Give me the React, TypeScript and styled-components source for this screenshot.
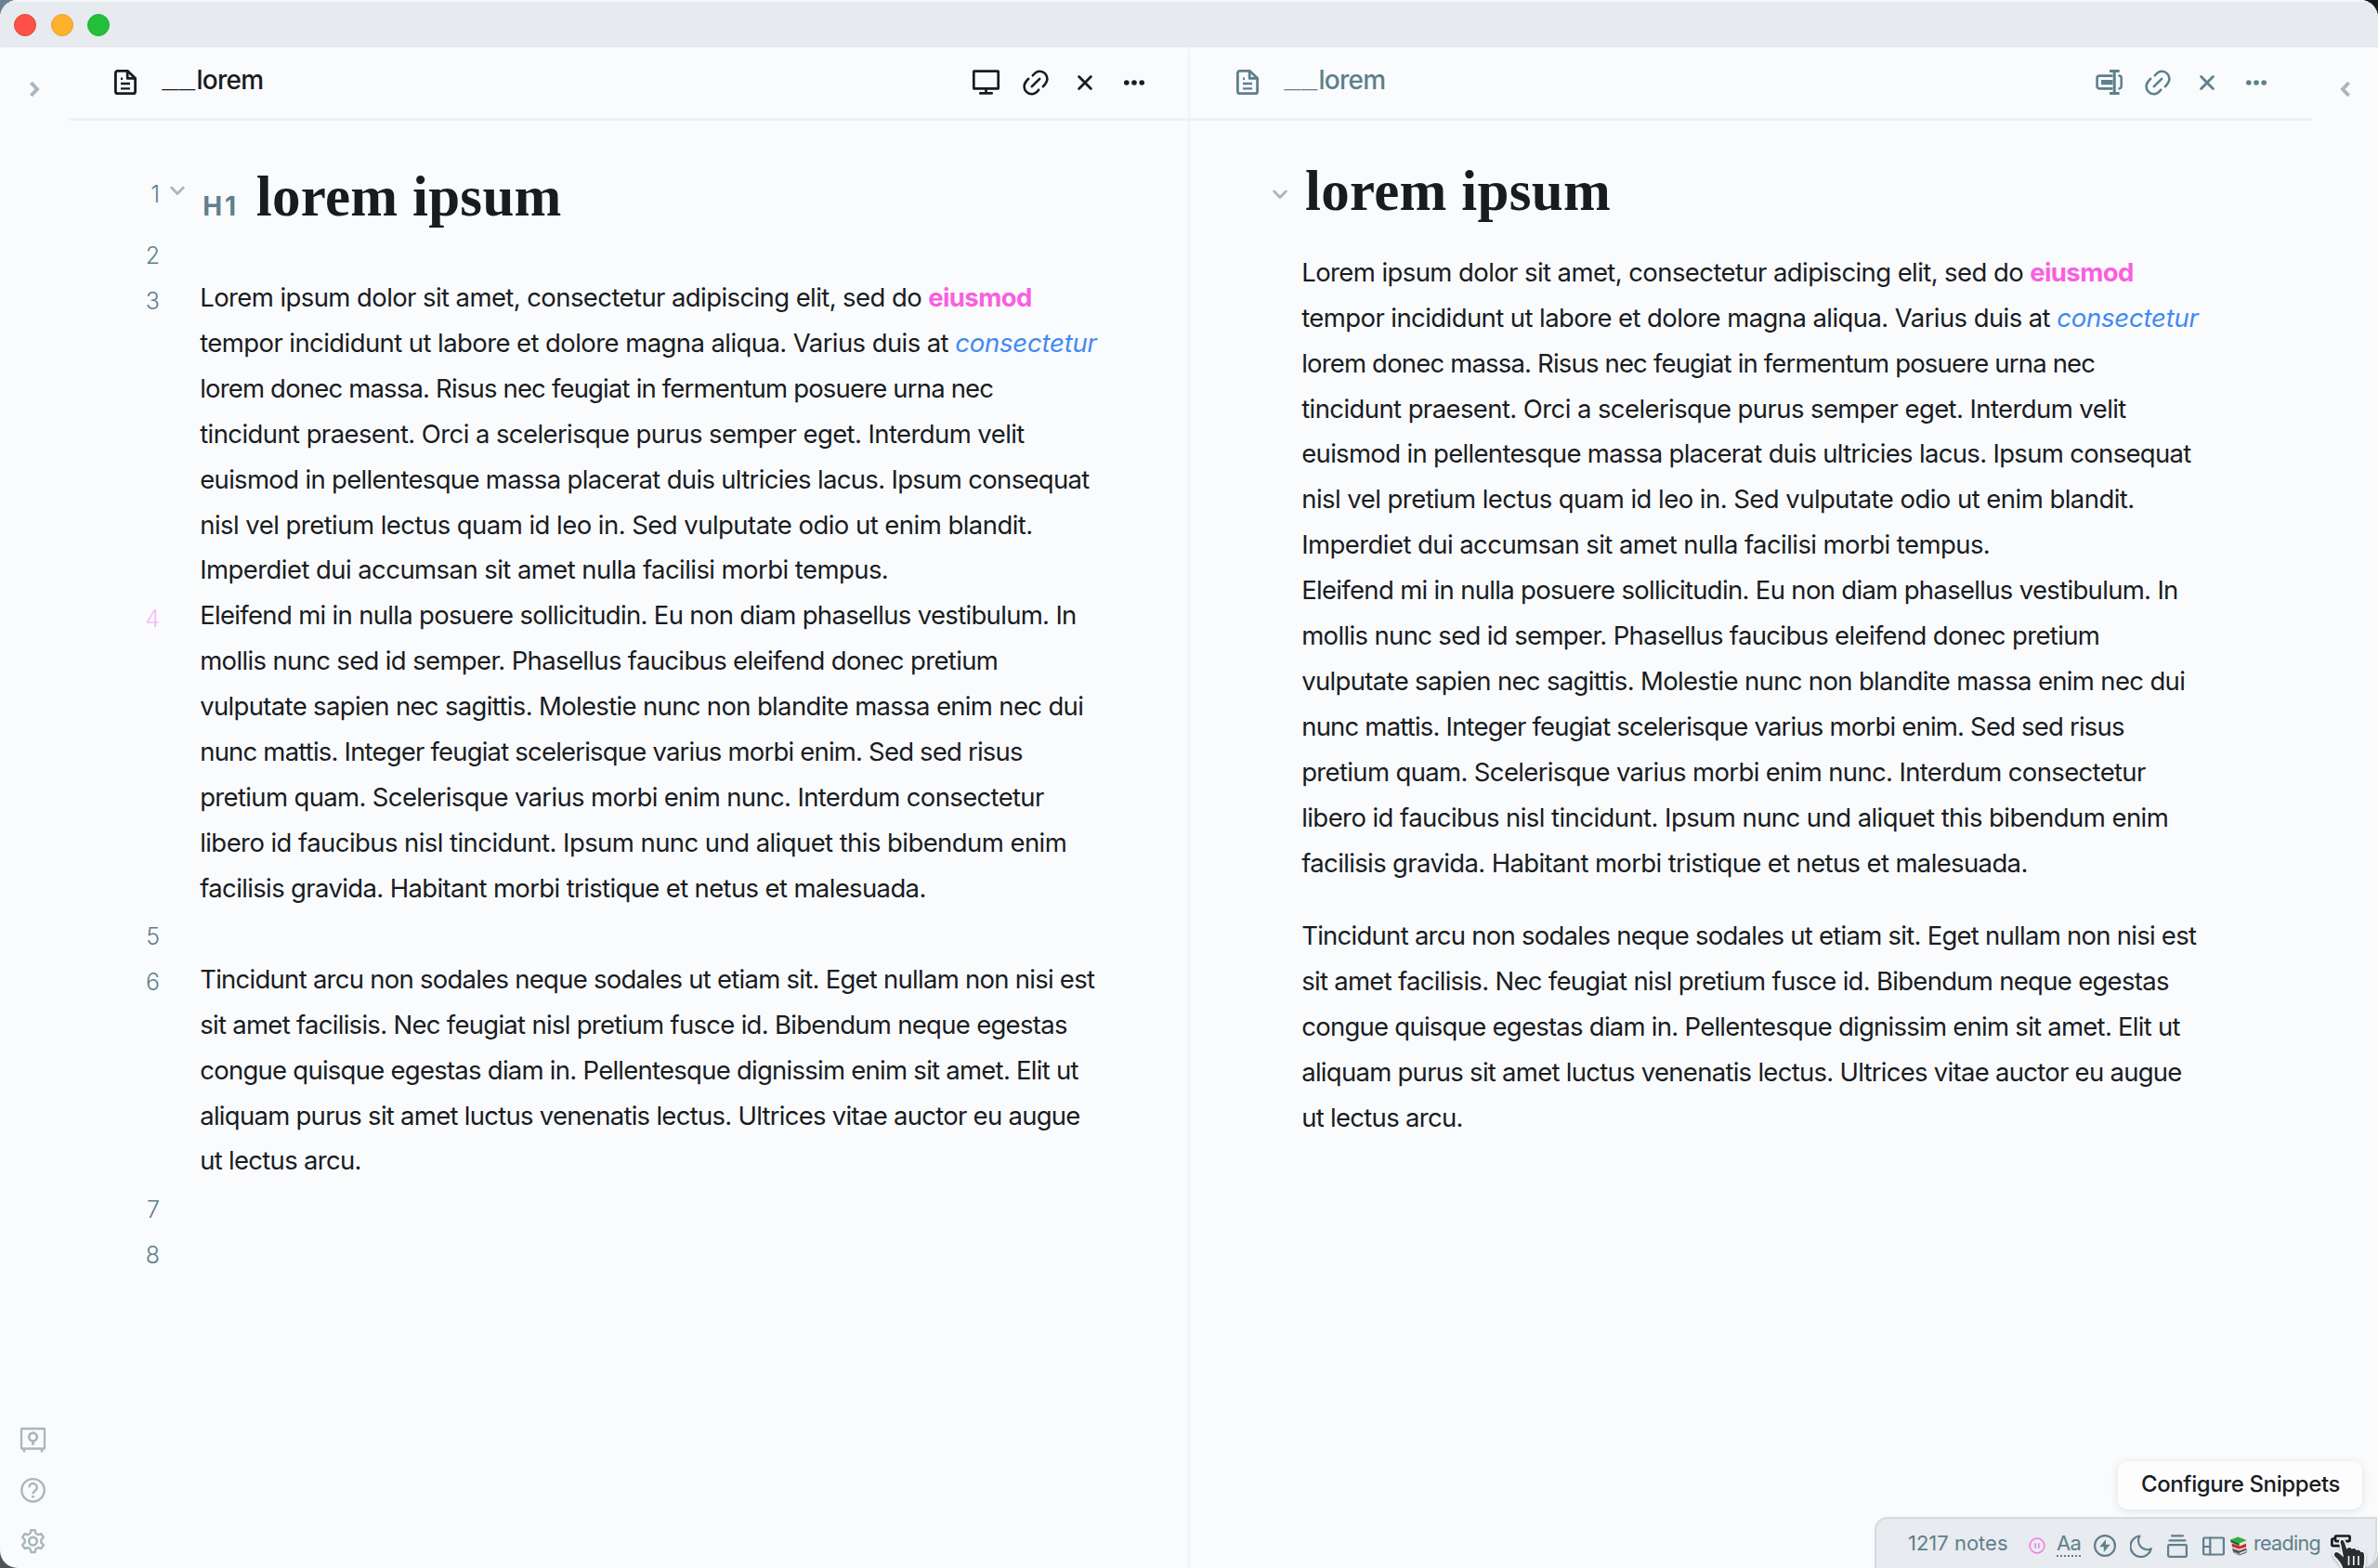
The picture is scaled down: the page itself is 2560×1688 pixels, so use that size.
import React, { useLayoutEffect, useRef, useState } from "react";
import styled, { createGlobalStyle, css } from "styled-components";

const slate = "#5f7f8d";
const faint = "#a9b7bc";
const ink = "#191c1f";

const Global = createGlobalStyle`
  * { box-sizing: border-box; }
  html, body { margin: 0; padding: 0; }
  body { font-family: Inter, "Liberation Sans", sans-serif; color: ${ink}; }
`;

const Desktop = styled.div`
  width: 2560px;
  height: 1688px;
  overflow: hidden;
  background:
    linear-gradient(90deg, #6c8290 0 50%, #15191d 50%) top / 100% 50% no-repeat,
    linear-gradient(90deg, #505256 0 50%, #c3c6c9 50%) bottom / 100% 50% no-repeat;
`;

const Window = styled.div`
  display: flex;
  flex-direction: column;
  width: 100%;
  height: 100%;
  overflow: hidden;
  border-radius: 19px;
  background: #fafbfd;
`;

const TitleBar = styled.div`
  display: flex;
  align-items: center;
  gap: 15.4px;
  flex: none;
  height: 51px;
  padding: 3px 15.3px 0;
  background: #e7eaee;
  box-shadow: inset 0 2px 1px #f3f5f7;
`;

const Light = styled.span<{ $color: string; $edge: string }>`
  width: 24px;
  height: 24px;
  border-radius: 50%;
  border: 1px solid ${(p) => p.$edge};
  background: ${(p) => p.$color};
`;

const Workspace = styled.div`
  display: grid;
  grid-template-columns: 74px 1207px 1208px 71px;
  flex: 1;
  min-height: 0;
`;

const Rail = styled.div<{ $side: "left" | "right" }>`
  display: flex;
  flex-direction: column;
  align-items: flex-start;
  justify-content: space-between;
  padding: 35px 0 15px ${(p) => (p.$side === "left" ? "20.5px" : "20px")};
  color: ${faint};
`;

const RailIcons = styled.div`
  display: flex;
  flex-direction: column;
  gap: 25.2px;
`;

const Pane = styled.section<{ $divided?: boolean }>`
  display: flex;
  flex-direction: column;
  ${(p) => p.$divided && css`border-right: 2px solid #f1f3f5;`}
`;

const PaneHeader = styled.header<{ $active?: boolean }>`
  display: flex;
  align-items: center;
  flex: none;
  height: 79px;
  padding: 0 ${(p) => (p.$active ? 40.5 : 42)}px 1px ${(p) => (p.$active ? 48.5 : 49.5)}px;
  border-bottom: 3px solid #eff1f3;
  color: ${(p) => (p.$active ? ink : slate)};
`;

const PaneTitle = styled.div`
  flex: 1;
  margin: -5px 0 0 28px;
  font-size: 28px;
  font-weight: 500;
  line-height: 40px;
`;

const Underscores = styled.span`
  display: inline-block;
  width: 37px;
  font-family: "Liberation Sans", sans-serif;
  font-size: 31px;
  font-weight: 700;
  letter-spacing: 1px;
  line-height: 20px;
  vertical-align: 3px;
`;

const Actions = styled.div`
  display: flex;
  gap: 17px;
`;

const IconSlot = styled.span<{ $w?: number; $h?: number }>`
  display: flex;
  align-items: center;
  justify-content: center;
  width: ${(p) => p.$w ?? 36}px;
  height: ${(p) => p.$h ?? 36}px;
  svg { flex: none; overflow: visible; }
`;

const Editor = styled.div`
  display: flex;
  flex-direction: column;
  padding-top: 43.6px;
`;

const EditorRow = styled.div<{ $height?: number }>`
  display: grid;
  grid-template-columns: 98px 43.2px 1fr;
  min-height: ${(p) => p.$height ?? 48.93}px;
`;

const LineNumber = styled.div<{ $heading?: boolean; $current?: boolean }>`
  padding-top: ${(p) => (p.$heading ? 15.4 : 7.6)}px;
  text-align: right;
  font-size: 25px;
  font-weight: 350;
  line-height: 40px;
  color: ${(p) => (p.$current ? "#f3bdf6" : slate)};
`;

const Fold = styled.div<{ $top: number; $left: number }>`
  padding: ${(p) => p.$top}px 0 0 ${(p) => p.$left}px;
  color: ${faint};
  line-height: 0;
`;

const Heading = styled.h1<{ $indent: number }>`
  margin: 0;
  height: 73.400px;
  padding-left: ${(p) => p.$indent}px;
  font-family: "Liberation Serif", serif;
  font-size: 61px;
  font-weight: 700;
  line-height: 75px;
  white-space: pre;
`;

const HeadingMark = styled.span`
  display: inline-block;
  width: 57.5px;
  font-family: Inter, sans-serif;
  font-size: 28px;
  line-height: 28px;
  color: ${slate};
`;

const Preview = styled.div`
  display: grid;
  grid-template-columns: 120.2px 1fr;
  padding-top: 37.6px;
`;

const PreviewBody = styled.div`
  display: flex;
  flex-direction: column;
`;

const Paragraph = styled.div<{ $gap?: number }>`
  margin-top: ${(p) => p.$gap ?? 0}px;
  font-size: 27.5px;
`;

const TextLine = styled.div`
  height: 48.93px;
  line-height: 48.93px;
  white-space: pre;
`;

const Run = styled.span<{ $tone?: "bold" | "italic" }>`
  display: inline-block;
  white-space: pre;
  ${(p) => p.$tone === "bold" && css`font-weight: 700; color: #f95fe0;`}
  ${(p) => p.$tone === "italic" && css`font-style: italic; color: #4289f2;`}
`;

/* Spreads its letters so that the run takes exactly the given width. */
function Fit({ text, width, tone }: { text: string; width: number; tone?: "bold" | "italic" }) {
  const ref = useRef<HTMLSpanElement>(null);
  const [spacing, setSpacing] = useState(0);
  useLayoutEffect(() => {
    if (ref.current) {
      const natural = ref.current.getBoundingClientRect().width;
      setSpacing((width - natural) / text.length);
    }
  }, [text, width]);
  return (
    <Run ref={ref} $tone={tone} style={{ letterSpacing: `${spacing}px` }}>
      {text}
    </Run>
  );
}

type Piece = [text: string, width: number, tone?: "bold" | "italic"];

const first: Piece[][] = [
  [["Lorem ipsum dolor sit amet, consectetur adipiscing elit, sed do ", 784], ["eiusmod", 111.5, "bold"]],
  [["tempor incididunt ut labore et dolore magna aliqua. Varius duis at ", 813], ["consectetur", 152.5, "italic"]],
  [["lorem donec massa. Risus nec feugiat in fermentum posuere urna nec", 854]],
  [["tincidunt praesent. Orci a scelerisque purus semper eget. Interdum velit", 887.5]],
  [["euismod in pellentesque massa placerat duis ultricies lacus. Ipsum consequat", 957.5]],
  [["nisl vel pretium lectus quam id leo in. Sed vulputate odio ut enim blandit.", 896.5]],
  [["Imperdiet dui accumsan sit amet nulla facilisi morbi tempus.", 741]],
];
const second: Piece[][] = [
  [["Eleifend mi in nulla posuere sollicitudin. Eu non diam phasellus vestibulum. In", 943.5]],
  [["mollis nunc sed id semper. Phasellus faucibus eleifend donec pretium", 859]],
  [["vulputate sapien nec sagittis. Molestie nunc non blandite massa enim nec dui", 951]],
  [["nunc mattis. Integer feugiat scelerisque varius morbi enim. Sed sed risus", 885.5]],
  [["pretium quam. Scelerisque varius morbi enim nunc. Interdum consectetur", 908.5]],
  [["libero id faucibus nisl tincidunt. Ipsum nunc und aliquet this bibendum enim", 933]],
  [["facilisis gravida. Habitant morbi tristique et netus et malesuada.", 781.5]],
];
const third: Piece[][] = [
  [["Tincidunt arcu non sodales neque sodales ut etiam sit. Eget nullam non nisi est", 963]],
  [["sit amet facilisis. Nec feugiat nisl pretium fusce id. Bibendum neque egestas", 933.5]],
  [["congue quisque egestas diam in. Pellentesque dignissim enim sit amet. Elit ut", 945.5]],
  [["aliquam purus sit amet luctus venenatis lectus. Ultrices vitae auctor eu augue", 947.5]],
  [["ut lectus arcu.", 173.5]],
];

function Prose({ lines, gap }: { lines: Piece[][]; gap?: number }) {
  return (
    <Paragraph $gap={gap}>
      {lines.map((line, i) => (
        <TextLine key={i}>
          {line.map(([text, width, tone]) => (
            <Fit key={text} text={text} width={width} tone={tone} />
          ))}
        </TextLine>
      ))}
    </Paragraph>
  );
}

const StrokeSvg = styled.svg<{ $sw: number }>`
  display: block;
  fill: none;
  stroke: currentColor;
  stroke-width: ${(p) => p.$sw};
  stroke-linecap: round;
  stroke-linejoin: round;
`;

const DocIcon = () => (
  <StrokeSvg width="24" height="27" viewBox="0 0 24 27" $sw={2.8}>
    <path d="M14.5 1.4H3.6a2.2 2.2 0 0 0-2.2 2.2v19.8a2.2 2.2 0 0 0 2.2 2.2h16.8a2.2 2.2 0 0 0 2.2-2.2V9.2z" />
    <path d="M14.2 1.8v7.6h8" />
    <path d="M7 15h10M7 20.4h10" strokeWidth="2.4" strokeLinecap="butt" />
    <path d="M7 9.7h2" strokeWidth="2.4" strokeLinecap="butt" />
  </StrokeSvg>
);
const MonitorIcon = () => (
  <StrokeSvg width="29" height="27" viewBox="0 0 29 27" $sw={2.7}>
    <rect x="1.3" y="1.6" width="26.4" height="18.8" rx="0.5" />
    <path d="M14.5 20.5v5M8.3 25.4h12.4" />
  </StrokeSvg>
);
const LinkIcon = () => (
  <StrokeSvg width="28" height="28" viewBox="0 0 28 28" $sw={2.6}>
    <path d="M10.8 6.3C13 3.4 15.5 1.7 18.3 1.7a8.2 8.2 0 0 1 8.1 8.1c0 3-1.7 5.6-4.6 8.4" />
    <path d="M17.2 21.7c-2.2 2.9-4.7 4.6-7.5 4.6a8.2 8.2 0 0 1-8.1-8.1c0-3 1.7-5.6 4.6-8.4" />
    <path d="M9.8 18.2l8.4-8.4" />
  </StrokeSvg>
);
const CrossIcon = () => (
  <StrokeSvg width="16" height="16" viewBox="0 0 16 16" $sw={2.8}>
    <path d="M1.6 1.6l12.8 12.8M14.4 1.6L1.6 14.4" />
  </StrokeSvg>
);
const DotsIcon = () => (
  <svg width="22" height="6" viewBox="0 0 22 6" fill="currentColor">
    <circle cx="2.8" cy="3" r="2.8" />
    <circle cx="11" cy="3" r="2.8" />
    <circle cx="19.2" cy="3" r="2.8" />
  </svg>
);
const RenameIcon = () => (
  <StrokeSvg width="29" height="27" viewBox="0 0 29 27" $sw={2.6}>
    <path d="M18.5 6.6H4a2.4 2.4 0 0 0-2.4 2.4v9a2.4 2.4 0 0 0 2.4 2.4h14.5" strokeLinecap="butt" />
    <rect x="6" y="11" width="12.5" height="5.2" fill="currentColor" stroke="none" />
    <path d="M20.2 1.4v24.2M15 1.4h10.6M15 25.6h10.6" strokeWidth="3" strokeLinecap="butt" />
    <path d="M24.5 6.6h.8a2.4 2.4 0 0 1 2.4 2.4v9a2.4 2.4 0 0 1-2.4 2.4h-.8" strokeWidth="2.5" strokeLinecap="butt" />
  </StrokeSvg>
);
const Chevron = ({ dir }: { dir: "left" | "right" }) => (
  <StrokeSvg width="12" height="18" viewBox="0 0 12 18" $sw={3.9}>
    <path d={dir === "right" ? "M2.4 2L9 9l-6.6 7" : "M9.6 2L3 9l6.6 7"} strokeLinecap="butt" strokeLinejoin="miter" />
  </StrokeSvg>
);
const FoldIcon = () => (
  <StrokeSvg width="16" height="11" viewBox="0 0 16 11" $sw={2.8}>
    <path d="M1.7 2L8 8.400 14.300 2" />
  </StrokeSvg>
);
const VaultIcon = () => (
  <StrokeSvg width="28" height="28" viewBox="0 0 28 28" $sw={2.3}>
    <rect x="2" y="2" width="25" height="21.500" rx="0.5" />
    <path d="M5 23.500v3.800M24 23.500v3.800" strokeLinecap="butt" strokeWidth="2.6" />
    <circle cx="14.500" cy="11" r="4.300" strokeWidth="2.7" />
    <path d="M14.500 15.300v4.500" strokeWidth="2.700" strokeLinecap="butt" />
  </StrokeSvg>
);
const HelpIcon = () => (
  <StrokeSvg width="28" height="28" viewBox="0 0 28 28" $sw={2.4}>
    <circle cx="14.500" cy="14.300" r="12.200" />
    <path d="M10.400 11.200a4.200 4.200 0 1 1 6.500 3.500c-1.600 1.100-2.400 1.800-2.400 3.500" strokeLinecap="butt" />
    <path d="M14.500 19.900v2.600" strokeLinecap="butt" strokeWidth="2.800" />
  </StrokeSvg>
);
const GearIcon = () => (
  <StrokeSvg width="28" height="28" viewBox="0 0 28 28" $sw={2.4}>
    <path d="M12.300 2.200h4.400l.8 3.500 2.500 1.500 3.400-1.100 2.500 3.900-2.600 2.500v3.200l2.600 2.500-2.500 3.900-3.400-1.100-2.500 1.500-.8 3.500h-4.400l-.8-3.500L9 21l-3.400 1.100-2.500-3.900 2.600-2.500v-3.200L3.100 10l2.500-3.900L9 7.200l2.500-1.500z" />
    <circle cx="14.500" cy="14.200" r="4.300" strokeWidth="2.700" />
  </StrokeSvg>
);
const PauseIcon = () => (
  <StrokeSvg width="18" height="18" viewBox="0 0 18 18" $sw={1.500}>
    <circle cx="9" cy="9" r="7.900" />
    <path d="M7.200 6.200v5.600M10.800 6.200v5.600" strokeLinecap="butt" />
  </StrokeSvg>
);
const BoltIcon = () => (
  <StrokeSvg width="24" height="24" viewBox="0 0 24 24" $sw={2.200}>
    <circle cx="12" cy="12" r="10.900" />
    <path d="M13 5.200L6.300 13.200h4.500v5.700l6.800-8.100H13z" fill="currentColor" stroke="none" />
  </StrokeSvg>
);
const MoonIcon = () => (
  <StrokeSvg width="24" height="25" viewBox="0 0 24 25" $sw={2.200}>
    <path d="M10.500 1.500a9.600 9.600 0 0 0 12.300 13.700A11.300 11.300 0 1 1 10.500 1.500z" />
  </StrokeSvg>
);
const StackIcon = () => (
  <StrokeSvg width="22" height="25" viewBox="0 0 22 25" $sw={2.200}>
    <rect x="1.100" y="11.200" width="19.800" height="12.600" rx="1.200" />
    <path d="M2.500 6.400h17M5 1.300h12" />
  </StrokeSvg>
);
const LayoutIcon = () => (
  <StrokeSvg width="24" height="21" viewBox="0 0 24 21" $sw={2.200}>
    <rect x="1.100" y="1.500" width="21.800" height="18" rx="1" />
    <path d="M8.300 1.500v18M1.500 11h6.800" />
  </StrokeSvg>
);
const BooksIcon = () => (
  <svg width="20" height="21" viewBox="0 0 20 21">
    <path d="M1 3.600L9.500.4l9.300 3.800-8 3.400z" fill="#2fb043" />
    <path d="M1 3.600l9.800 4v2.600L1.600 6.200z" fill="#14682a" />
    <path d="M10.800 7.600l8-3.400v2.400l-8 3.600z" fill="#dfe2da" />
    <path d="M2.600 7.400l8.400 3 7-2.600v4.400l-7.400 2.400-7.600-2.400z" fill="#d3222f" />
    <path d="M3 10.900l7.600 2.600 7.400-2.300v1.600l-7.200 2.700L3 12.800z" fill="#e9d3d0" />
    <path d="M3 13l7.800 2.500 7.200-2.700.8 1.800-.4 3-7.600 3-6.400-3z" fill="#57515a" />
    <path d="M11 17.600l7.300-2.900v1.900L11 19.400z" fill="#dcdadb" />
    <path d="M4.400 16.200l6.600 2.600v1.200l-6.400-2.400z" fill="#b9a3a6" />
  </svg>
);
const RollerIcon = () => (
  <StrokeSvg width="22" height="24" viewBox="0 0 22 24" $sw={2.700}>
    <rect x="5" y="1.500" width="15.600" height="5.600" rx="0.8" />
    <path d="M4.600 4.500H2.700a1.300 1.300 0 0 0-1.300 1.300v5a1.300 1.300 0 0 0 1.300 1.300h8.400v2" />
  </StrokeSvg>
);

const StatusDock = styled.footer`
  position: absolute;
  left: 2018px;
  top: 1633px;
  display: flex;
  align-items: flex-start;
  width: 541px;
  height: 55px;
  padding: 12px 0 0 34px;
  border: 2px solid #d5dade;
  border-bottom: 0;
  border-radius: 14px 0 19px 0;
  background: #e8ebef;
  color: ${slate};
`;

const StatusItem = styled.div<{ $w: number; $size?: number; $pink?: boolean; $dark?: boolean }>`
  display: flex;
  align-items: center;
  flex: none;
  width: ${(p) => p.$w}px;
  height: 34px;
  font-size: ${(p) => p.$size ?? 22}px;
  line-height: 30px;
  color: ${(p) => (p.$pink ? "#f478e6" : p.$dark ? ink : slate)};
`;

const StatusText = styled.div`
  margin-top: -6px;
`;

const Dotted = styled.div`
  height: 24px;
  width: 26px;
  line-height: 18px;
  text-align: center;
  border-bottom: 2px dotted ${slate};
`;

const Tooltip = styled.div`
  position: absolute;
  left: 2280px;
  top: 1573px;
  width: 263px;
  height: 52px;
  padding-left: 25px;
  border-radius: 10px;
  background: #fdfdfe;
  box-shadow: 0 2px 10px rgba(40, 50, 60, 0.13);
  font-size: 24px;
  font-weight: 500;
  line-height: 49px;
`;

const Pointer = styled.svg`
  position: absolute;
  left: 2508px;
  top: 1653px;
  filter: drop-shadow(0 1px 1.5px rgba(20, 25, 30, 0.3));
`;

const Title = () => (
  <PaneTitle>
    <Underscores>__</Underscores>
    <Fit text="lorem" width={72} />
  </PaneTitle>
);

export default function App() {
  return (
    <Desktop>
      <Global />
      <Window>
        <TitleBar>
          <Light $color="#ff5148" $edge="#e2443e" />
          <Light $color="#ffb12b" $edge="#e5a03a" />
          <Light $color="#22c03a" $edge="#26ad38" />
        </TitleBar>
        <Workspace>
          <Rail $side="left">
            <IconSlot $w={32} $h={20}><Chevron dir="right" /></IconSlot>
            <RailIcons>
              <IconSlot $w={29} $h={29}><VaultIcon /></IconSlot>
              <IconSlot $w={29} $h={29}><HelpIcon /></IconSlot>
              <IconSlot $w={29} $h={29}><GearIcon /></IconSlot>
            </RailIcons>
          </Rail>
          <Pane $divided>
            <PaneHeader $active>
              <DocIcon />
              <Title />
              <Actions>
                <IconSlot><MonitorIcon /></IconSlot>
                <IconSlot><LinkIcon /></IconSlot>
                <IconSlot><CrossIcon /></IconSlot>
                <IconSlot><DotsIcon /></IconSlot>
              </Actions>
            </PaneHeader>
            <Editor>
              <EditorRow $height={73.4}>
                <LineNumber $heading>1</LineNumber>
                <Fold $top={26.2} $left={10.5}><FoldIcon /></Fold>
                <Heading $indent={3}>
                  <HeadingMark><Fit text="H1" width={39} /></HeadingMark>
                  <Fit text="lorem ipsum" width={329} />
                </Heading>
              </EditorRow>
              <EditorRow><LineNumber>2</LineNumber></EditorRow>
              <EditorRow><LineNumber>3</LineNumber><span /><Prose lines={first} /></EditorRow>
              <EditorRow><LineNumber $current>4</LineNumber><span /><Prose lines={second} /></EditorRow>
              <EditorRow><LineNumber>5</LineNumber></EditorRow>
              <EditorRow><LineNumber>6</LineNumber><span /><Prose lines={third} /></EditorRow>
              <EditorRow><LineNumber>7</LineNumber></EditorRow>
              <EditorRow><LineNumber>8</LineNumber></EditorRow>
            </Editor>
          </Pane>
          <Pane>
            <PaneHeader>
              <DocIcon />
              <Title />
              <Actions>
                <IconSlot><RenameIcon /></IconSlot>
                <IconSlot><LinkIcon /></IconSlot>
                <IconSlot><CrossIcon /></IconSlot>
                <IconSlot><DotsIcon /></IconSlot>
              </Actions>
            </PaneHeader>
            <Preview>
              <Fold $top={36} $left={88.5}><FoldIcon /></Fold>
              <PreviewBody>
                <Heading $indent={3.8}><Fit text="lorem ipsum" width={329} /></Heading>
                <Prose lines={first} gap={27.8} />
                <Prose lines={second} />
                <Prose lines={third} gap={29.2} />
              </PreviewBody>
            </Preview>
          </Pane>
          <Rail $side="right">
            <IconSlot $w={32} $h={20}><Chevron dir="left" /></IconSlot>
          </Rail>
        </Workspace>
      </Window>
      <Tooltip><Fit text="Configure Snippets" width={214} /></Tooltip>
      <StatusDock>
        <StatusItem $w={130}><StatusText><Fit text="1217 notes" width={107.5} /></StatusText></StatusItem>
        <StatusItem $w={30} $pink><PauseIcon /></StatusItem>
        <StatusItem $w={39.5}><Dotted><Fit text="Aa" width={26} /></Dotted></StatusItem>
        <StatusItem $w={39.5}><BoltIcon /></StatusItem>
        <StatusItem $w={40}><MoonIcon /></StatusItem>
        <StatusItem $w={38}><StackIcon /></StatusItem>
        <StatusItem $w={29}><LayoutIcon /></StatusItem>
        <StatusItem $w={26}><BooksIcon /></StatusItem>
        <StatusItem $w={82.5} $size={21.5}><StatusText><Fit text="reading" width={72} /></StatusText></StatusItem>
        <StatusItem $w={24} $dark><RollerIcon /></StatusItem>
      </StatusDock>
      <Pointer width="46" height="35" viewBox="0 0 46 35">
        <path
          d="M11 8.500c-.8-2.200.2-3.900 1.800-4.300 1.800-.4 3 .6 3.600 2.300l2.300 6.600c1.600-1.400 4.200-1.300 5.300.4 1.700-1 4.200-.5 5.100 1.300 1.700-.7 4 .1 4.700 2 2.200-.3 3.900 1.300 4.100 3.600.5 6 .3 10.500-1.400 16.600H14c-1.500-5.500-4.500-9.500-8.200-13-2-2-2.500-4.600-.8-6 1.700-1.300 4.500-.6 6.400 1l2.200 2z"
          fill="#2b2d30"
          stroke="#f4f5f6"
          strokeWidth="1.800"
        />
        <path d="M20.500 22v10M25.800 22v10M31 22v10" stroke="#eceef0" strokeWidth="1.700" />
      </Pointer>
    </Desktop>
  );
}
